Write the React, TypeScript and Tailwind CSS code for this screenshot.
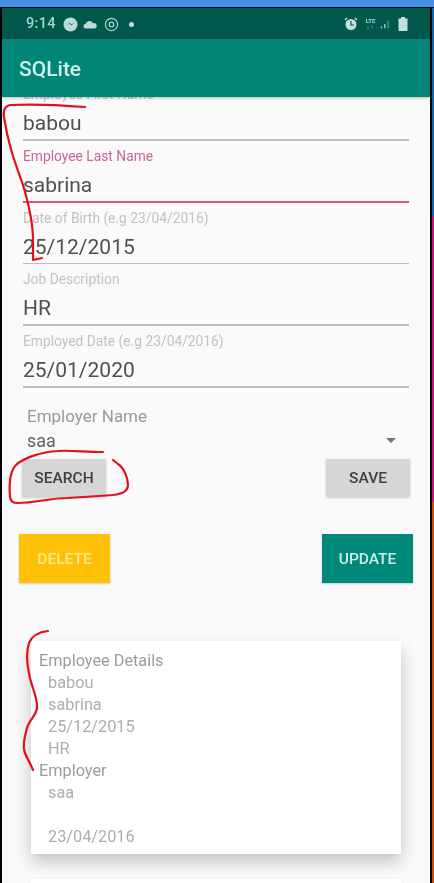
const font = { fontFamily: "Roboto, 'Noto Sans', sans-serif" };

const Field = ({
  label,
  value,
  active,
}: {
  label: string;
  value: string;
  active?: boolean;
}) => (
  <div className="flex h-[61.75px] flex-col">
    <div
      className={`mt-[7px] h-[16px] text-[13.8px] leading-[16px] ${
        active ? "text-[#c9669a]" : "text-[#c2c2c2]"
      }`}
    >
      {label}
    </div>
    <div className="mt-[7px] h-[28px] text-[21px] leading-[28px] text-[#505050]">
      {value}
    </div>
    <div
      className={`mt-[2px] h-[2px] ${active ? "bg-[#d5568a]" : "bg-[#bdbdbd]"}`}
    />
  </div>
);

const StatusBar = () => (
  <div className="flex h-[31px] shrink-0 items-center justify-between bg-[#00574b] pl-[24px] pr-[22px] pt-[1px] text-[#a9d5cd]">
    <div className="flex items-center gap-[5px]">
      <span className="mr-[2px] text-[14.5px] font-medium tracking-[0.3px]">9:14</span>
      <svg width="15" height="15" viewBox="0 0 16 16">
        <circle cx="8" cy="8" r="7.500" fill="#b9dcd5" />
        <path d="M4 9l3-3 2 2 3-2-3 3-2-2z" fill="#00574b" />
      </svg>
      <svg width="14" height="11" viewBox="0 0 16 12">
        <path
          d="M3 10.500a2.500 2.500 0 0 1 0-5 4.500 4.500 0 0 1 8.500-1 3 3 0 0 1 2 6z"
          fill="#b9dcd5"
        />
      </svg>
      <svg width="15" height="15" viewBox="0 0 16 16" fill="none" className="ml-[2px]">
        <circle cx="8" cy="8" r="6.500" stroke="#a9d5cd" strokeWidth="1.300" />
        <circle cx="8" cy="8" r="2.500" stroke="#a9d5cd" strokeWidth="1.300" />
      </svg>
      <span className="ml-[5px] h-[5px] w-[5px] rounded-full bg-[#b9dcd5]" />
    </div>
    <div className="flex items-center">
      <svg width="14" height="14" viewBox="0 0 14 14">
        <circle cx="7" cy="7.500" r="5.500" fill="#c3e0da" />
        <path d="M7 4v4h3" stroke="#00574b" strokeWidth="1.200" fill="none" />
        <path d="M1 3l2-2M13 3l-2-2" stroke="#c3e0da" strokeWidth="1.400" />
      </svg>
      <div className="ml-[6px] flex w-[13px] flex-col items-center text-[6px] font-bold leading-[6px] text-[#a9d5cd]">
        <span>LTE</span>
        <span className="tracking-[1px]">↓↑</span>
      </div>
      <svg width="10" height="12" viewBox="0 0 12 12" className="ml-[3px]">
        <path d="M1 9h1.500v2H1zM5 6h1.500v5H5z" fill="#a9d5cd" />
        <path d="M9 2h1.500v9H9z" fill="#5f9e92" />
      </svg>
      <svg width="10" height="14" viewBox="0 0 10 14" className="ml-[8px]">
        <path d="M3 0h4v1.500h2.500V14H.5V1.500H3z" fill="#c3e0da" />
      </svg>
    </div>
  </div>
);

const ActionButton = ({
  label,
  className,
}: {
  label: string;
  className: string;
}) => (
  <div
    className={`flex items-center justify-center pt-[2px] text-[15.5px] font-medium shadow-[0_1px_2px_rgba(0,0,0,0.2)] ${className}`}
  >
    {label}
  </div>
);

const detailLines: [string, boolean][] = [
  ["Employee Details", false],
  ["babou", true],
  ["sabrina", true],
  ["25/12/2015", true],
  ["HR", true],
  ["Employer", false],
  ["saa", true],
  ["\u00a0", true],
  ["23/04/2016", true],
];

export default function App() {
  return (
    <div
      className="relative flex h-[883px] w-[434px] flex-col overflow-hidden bg-black blur-[0.4px]"
      style={font}
    >
      <div className="h-[7px] shrink-0 bg-[#4a90e2]" />
      <div className="flex min-h-0 flex-1 pt-[1px]">
        <div className="flex w-[430px] flex-col pl-[2px]">
          <StatusBar />
          <div className="z-10 flex h-[58px] shrink-0 items-center bg-[#008577] pl-[17px] pt-[3px] text-[21px] font-medium text-[#cff1ea] shadow-[0_1px_3px_rgba(0,0,0,0.25)]">
            SQLite
          </div>

          <div className="min-h-0 flex-1 overflow-hidden bg-[#fafafa]">
            <div className="mt-[-18px] px-[21px]">
              <Field label="Employee First Name" value="babou" />
              <Field label="Employee Last Name" value="sabrina" active />
              <Field label="Date of Birth (e.g 23/04/2016)" value="25/12/2015" />
              <Field label="Job Description" value="HR" />
              <Field
                label="Employed Date (e.g 23/04/2016)"
                value="25/01/2020"
              />
            </div>

            <div className="mt-[17px] flex items-start justify-between pl-[25px] pr-[34px]">
              <div>
                <div className="text-[17px] leading-[22px] text-[#9a9a9a]">
                  Employer Name
                </div>
                <div className="mt-[4px] text-[18px] leading-[20px] text-[#606060]">
                  saa
                </div>
              </div>
              <div className="mt-[33px] h-0 w-0 border-x-[5px] border-t-[5px] border-x-transparent border-t-[#757575]" />
            </div>

            <div className="mt-[8px] flex justify-between px-[20px]">
              <ActionButton
                label="SEARCH"
                className="h-[38px] w-[84px] bg-[#d6d6d6] text-[#404040]"
              />
              <ActionButton
                label="SAVE"
                className="h-[38px] w-[84px] bg-[#d6d6d6] text-[#404040]"
              />
            </div>

            <div className="mt-[37px] flex justify-between pl-[17px] pr-[17px]">
              <ActionButton
                label="DELETE"
                className="h-[49px] w-[91px] bg-[#ffc107] text-[#fbe88a]"
              />
              <ActionButton
                label="UPDATE"
                className="h-[49px] w-[91px] bg-[#00897b] text-[#cdeee8]"
              />
            </div>

            <div className="mt-[58px] ml-[29px] w-[370px] bg-white pb-[6px] pl-[8px] pt-[9px] text-[16.3px] leading-[22px] shadow-[0_8px_16px_rgba(0,0,0,0.22)]">
              {detailLines.map(([line, indented], i) => (
                <div
                  key={i}
                  className={
                    indented
                      ? "pl-[9px] text-[#adadad]"
                      : "text-[#9c9c9c]"
                  }
                >
                  {line}
                </div>
              ))}
            </div>

            <div className="ml-[29px] mt-[25px] h-[20px] w-[370px] bg-white shadow-[0_1px_4px_rgba(0,0,0,0.08)]" />
          </div>
        </div>
        <div className="w-[2px]" />
        <div className="flex w-[2px] flex-col">
          <div className="h-[208px] bg-[#1565a8]" />
          <div className="h-[286px] bg-[#c2187a]" />
          <div className="flex-1 bg-[#c4500f]" />
        </div>
      </div>

      {/* pen marks drawn over the screenshot */}
      <svg
        className="pointer-events-none absolute left-0 top-0 z-20"
        width="434"
        height="883"
        fill="none"
        stroke="#e3101c"
        strokeWidth="2.200"
        strokeLinecap="round"
        strokeLinejoin="round"
      >
        <path d="M85 107C60 105 30 104 10 105C5 106 3 110 4 117C8 145 16 165 23 185C29 205 33 225 33 240L33 260L42 258" />
        <path d="M103 452C85 452 70 450 58 451C40 452 25 458 17 464C10 470 9 485 10 497C11 502 13 503 18 503C35 503 50 498 67 498C85 497 100 496 113 495C122 494 128 491 128 485C128 478 124 468 118 464L113 460" />
        <path d="M48 631C38 632 32 636 29 643C26 652 27 665 30 678C33 690 38 700 37 708C36 716 29 720 27 728C25 736 23 742 24 749C25 756 29 760 33 770" />
      </svg>
    </div>
  );
}
